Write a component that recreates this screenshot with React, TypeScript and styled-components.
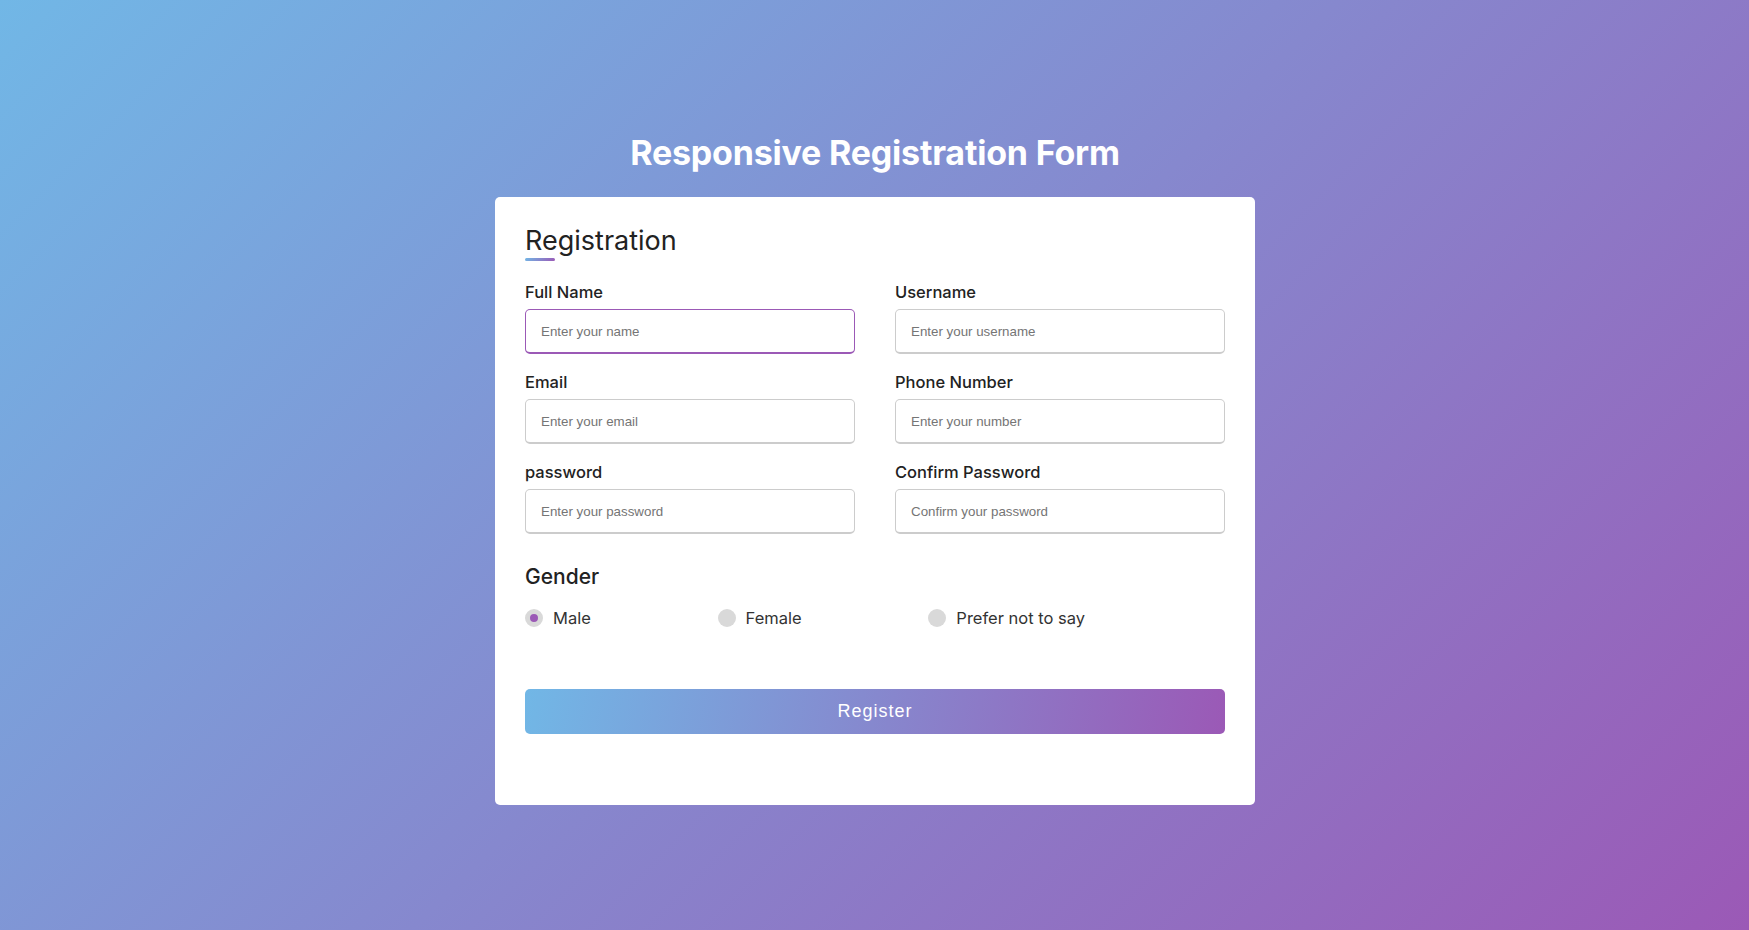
import React from "react";
import styled, { createGlobalStyle } from "styled-components";

const GlobalStyle = createGlobalStyle`
  * { box-sizing: border-box; }
  html, body { margin: 0; padding: 0; }
  body {
    font-family: "Inter", "Open Sans", sans-serif;
    background: linear-gradient(135deg, #71b7e6, #9b59b6);
    min-height: 100vh;
  }
`;

const Page = styled.div`
  min-height: 100vh;
  display: flex;
  flex-direction: column;
  align-items: center;
  justify-content: center;
  padding: 14px 10px 10px 11px;
`;

const PageTitle = styled.h1`
  margin: 0 0 20px;
  font-family: "Inter", sans-serif;
  font-weight: 700;
  font-size: 34px;
  line-height: 48px;
  color: #fff;
  letter-spacing: -0.2px;
`;

const Card = styled.div`
  width: 760px;
  background: #fff;
  border-radius: 5px;
  padding: 25px 30px 25px;
`;

const Title = styled.div`
  position: relative;
  font-size: 27px;
  font-weight: 400;
  line-height: 38px;
  color: #222;
  &::before {
    content: "";
    position: absolute;
    left: 0;
    bottom: -1px;
    height: 3px;
    width: 30px;
    border-radius: 5px;
    background: linear-gradient(135deg, #71b7e6, #9b59b6);
  }
`;

const Fields = styled.div`
  display: grid;
  grid-template-columns: 330px 330px;
  justify-content: space-between;
  row-gap: 16px;
  margin: 20px 0 28px;
`;

const Field = styled.div`
  display: flex;
  flex-direction: column;
`;

const Label = styled.span`
  display: block;
  font-size: 16.5px;
  font-weight: 500;
  line-height: 24px;
  color: #222;
  margin-bottom: 5px;
`;

const Input = styled.input<{ $active?: boolean }>`
  height: 45px;
  width: 100%;
  outline: none;
  font-family: "Liberation Sans", Arial, sans-serif;
  font-size: 13.333px;
  color: #333;
  border-radius: 5px;
  padding-left: 15px;
  border: 1px solid ${(p) => (p.$active ? "#9b59b6" : "#ccc")};
  border-bottom-width: 2px;
  background: #fff;
  caret-color: #000;
  &::placeholder { color: #757575; }
  &:focus { border-color: #9b59b6; }
`;

const GenderTitle = styled.div`
  font-size: 21px;
  font-weight: 500;
  line-height: 30px;
  color: #222;
`;

const Category = styled.div`
  display: flex;
  width: 80%;
  justify-content: space-between;
  margin: 14px 0 0;
`;

const Option = styled.label`
  display: flex;
  align-items: center;
  font-size: 16.5px;
  line-height: 24px;
  color: #333;
  cursor: pointer;
`;

const Dot = styled.span<{ $checked?: boolean }>`
  height: 18px;
  width: 18px;
  border-radius: 50%;
  margin-right: 10px;
  background: ${(p) => (p.$checked ? "#9b59b6" : "#d9d9d9")};
  border: 5px solid ${(p) => (p.$checked ? "#d9d9d9" : "transparent")};
`;

const Button = styled.button`
  display: block;
  width: 100%;
  height: 45px;
  margin: 59px 0 46px;
  border: none;
  border-radius: 5px;
  color: #fff;
  font-family: "Liberation Sans", Arial, sans-serif;
  font-size: 18px;
  font-weight: 500;
  letter-spacing: 1px;
  cursor: pointer;
  background: linear-gradient(100deg, #71b7e6, #9b59b6);
`;

const fields = [
  { label: "Full Name", placeholder: "Enter your name", active: true },
  { label: "Username", placeholder: "Enter your username" },
  { label: "Email", placeholder: "Enter your email" },
  { label: "Phone Number", placeholder: "Enter your number" },
  { label: "password", placeholder: "Enter your password" },
  { label: "Confirm Password", placeholder: "Confirm your password" },
];

const genders = [
  { label: "Male", checked: true },
  { label: "Female" },
  { label: "Prefer not to say" },
];

export default function App() {
  return (
    <>
      <GlobalStyle />
      <Page>
        <PageTitle>Responsive Registration Form</PageTitle>
        <Card>
          <Title>Registration</Title>
          <form onSubmit={(e) => e.preventDefault()}>
            <Fields>
              {fields.map((f, i) => (
                <Field key={f.label}>
                  <Label>{f.label}</Label>
                  <Input
                    type="text"
                    placeholder={f.placeholder}
                    $active={f.active}
                    autoFocus={i === 0}
                  />
                </Field>
              ))}
            </Fields>
            <GenderTitle>Gender</GenderTitle>
            <Category>
              {genders.map((g) => (
                <Option key={g.label}>
                  <Dot $checked={g.checked} />
                  {g.label}
                </Option>
              ))}
            </Category>
            <Button type="submit">Register</Button>
          </form>
        </Card>
      </Page>
    </>
  );
}
